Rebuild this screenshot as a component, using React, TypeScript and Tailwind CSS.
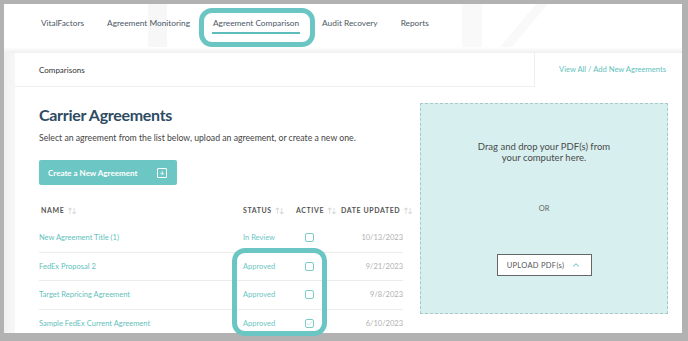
import { ChevronUp, Check } from "lucide-react";

const navItems = ["VitalFactors", "Agreement Monitoring", "Agreement Comparison", "Audit Recovery", "Reports"];

const rows = [
    { name: "New Agreement Title (1)", status: "In Review", checked: false, date: "10/13/2023" },
    { name: "FedEx Proposal 2", status: "Approved", checked: false, date: "9/21/2023" },
    { name: "Target Repricing Agreement", status: "Approved", checked: false, date: "9/8/2023" },
    { name: "Sample FedEx Current Agreement", status: "Approved", checked: true, date: "6/10/2023" },
];

const SortIcon = () => (
    <span className="ml-[3px] text-[7px] text-[#c8c8c8] tracking-[-1px] font-normal">↑↓</span>
);

const App = () => {
    return (
        <div className="relative w-[688px] h-[341px] overflow-hidden bg-[#b2b2b2] pt-[4px] pl-[4px] pr-[6px] pb-[8px]" style={{ fontFamily: "Lato, 'Open Sans', sans-serif" }}>
            <div className="relative h-full bg-white flex flex-col overflow-hidden">

                {/* Nav */}
                <div className="relative h-[43px] shrink-0 flex items-start pt-[13px] pl-[37px] gap-[23px] text-[8.3px] text-[#4b5866]">
                    <div className="absolute left-[144px] top-0 w-[19px] h-[43px] bg-[#f7f7f7]" />
                    <div className="absolute left-[458px] top-0 w-[20px] h-[43px] bg-[#f9f9f9]" />
                    <div className="absolute left-[532px] top-0 w-[12px] h-[43px] bg-[#f9f9f9] -skew-x-[40deg] origin-top" />
                    {navItems.map((item) => (
                        <div key={item} className="relative">
                            {item}
                            {item === "Agreement Comparison" && (
                                <div className="absolute left-[-1px] right-[-1px] top-[15px] h-[2px] bg-[#5dbdbb]" />
                            )}
                        </div>
                    ))}
                </div>
                <div className="h-[6px] shrink-0 bg-gradient-to-b from-white to-[#efefef]" />

                {/* Body */}
                <div className="flex flex-1 min-h-0">
                    <div className="w-[11px] shrink-0 bg-gradient-to-r from-[#f1f1f1] to-[#f7f7f7]" />
                    <div className="flex-1 flex flex-col bg-white">
                        <div className="flex h-[34px] shrink-0">
                            <div className="w-[520px] border-r border-b border-[#eeeeee] flex items-center pl-[24px] text-[8px] text-[#333]">
                                Comparisons
                            </div>
                            <div className="flex-1 flex items-center pl-[24px] text-[7.6px] text-[#5fbfbd]">
                                View All / Add New Agreements
                            </div>
                        </div>

                        <div className="flex flex-1">
                            <div className="w-[405px] pl-[24px] pt-[18px] shrink-0">
                                <h1 className="text-[16px] leading-[20px] font-bold tracking-[-0.3px] text-[#2e4b64]">Carrier Agreements</h1>
                                <p className="mt-[7px] text-[8.7px] leading-[12px] text-[#444]">
                                    Select an agreement from the list below, upload an agreement, or create a new one.
                                </p>
                                <button className="mt-[16px] w-[138px] h-[25px] bg-[#6cc6c3] rounded-[2px] flex items-center justify-between pl-[9px] pr-[10px] text-[8px] font-bold text-white">
                                    Create a New Agreement
                                    <span className="w-[10px] h-[10px] border border-white rounded-[1px] flex items-center justify-center text-[8px] leading-none">+</span>
                                </button>

                                <div className="mt-[18px] w-[364px]">
                                    <div className="flex items-center h-[14px] text-[7px] font-bold tracking-[0.6px] text-[#555]">
                                        <div className="w-[204px] pl-[2px] flex items-center">NAME<SortIcon /></div>
                                        <div className="w-[53px] flex items-center">STATUS<SortIcon /></div>
                                        <div className="w-[45px] flex items-center">ACTIVE<SortIcon /></div>
                                        <div className="w-[62px] flex items-center whitespace-nowrap">DATE UPDATED<SortIcon /></div>
                                    </div>
                                    <div className="mt-[7px]">
                                        {rows.map((r, i) => (
                                            <div key={r.name} className={`flex items-center h-[28.5px] text-[7.5px] ${i < rows.length - 1 ? "border-b border-[#ececec]" : ""}`}>
                                                <div className="w-[204px] text-[#5fbfbd]">{r.name}</div>
                                                <div className="w-[53px] text-[#6cc6c3]">{r.status}</div>
                                                <div className="w-[45px] pl-[9px]">
                                                    <div className="w-[9px] h-[9px] border border-[#7ccdca] rounded-[2px] flex items-center justify-center">
                                                        {r.checked && <Check size={7} strokeWidth={2} className="text-[#9bd8d6]" />}
                                                    </div>
                                                </div>
                                                <div className="w-[62px] text-right text-[#b0b0b0]">{r.date}</div>
                                            </div>
                                        ))}
                                    </div>
                                </div>
                            </div>

                            <div className="mt-[16px] w-[248px] h-[211px] bg-[#d7efef] border border-dashed border-[#a9c9c9] flex flex-col items-center">
                                <p className="mt-[37px] text-[9.5px] leading-[11px] text-[#4a4a4a] text-center">
                                    Drag and drop your PDF(s) from<br />your computer here.
                                </p>
                                <div className="mt-[40px] text-[7.5px] text-[#666]">OR</div>
                                <button className="mt-[40px] w-[95px] h-[22px] bg-white border border-[#666] flex items-center justify-center gap-[7px] text-[7.5px] text-[#555] tracking-[0.3px]">
                                    UPLOAD PDF(s)
                                    <ChevronUp size={10} strokeWidth={2.5} className="text-[#6cc6c3]" />
                                </button>
                            </div>
                        </div>
                    </div>
                </div>
            </div>

            {/* Highlight annotations */}
            <div className="absolute left-[199px] top-[8px] w-[116px] h-[39px] border-[5px] border-[#6bc5c3] rounded-[13px]" />
            <div className="absolute left-[232px] top-[248px] w-[95px] h-[88px] border-[5px] border-[#6bc5c3] rounded-[13px]" />
        </div>
    );
};

export default App;
